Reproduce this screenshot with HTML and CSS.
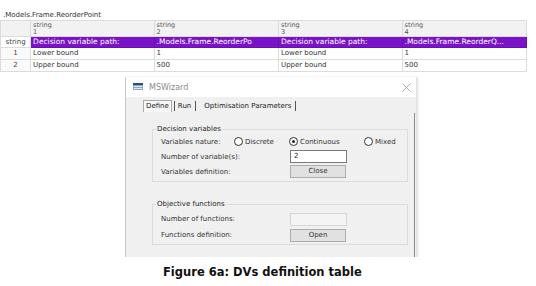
FILE: index.html
```html
<!DOCTYPE html>
<html lang="en">
<head>
    <meta charset="UTF-8">
    <meta name="viewport" content="width=device-width, initial-scale=1.0">
    <title>Figure 6a</title>
    <link rel="stylesheet" href="styles.css">
</head>
<body>
    <div class="shot">
        <div class="path-label">.Models.Frame.ReorderPoint</div>

        <table class="grid">
            <colgroup>
                <col class="col-head">
                <col class="col-a">
                <col class="col-b">
                <col class="col-a">
                <col class="col-b">
            </colgroup>
            <tr class="head-row">
                <th></th>
                <th>string<br>1</th>
                <th>string<br>2</th>
                <th>string<br>3</th>
                <th>string<br>4</th>
            </tr>
            <tr class="selected-row">
                <td class="row-head">string</td>
                <td>Decision variable path:</td>
                <td>.Models.Frame.ReorderPo</td>
                <td>Decision variable path:</td>
                <td>.Models.Frame.ReorderQ...</td>
            </tr>
            <tr>
                <td class="row-head">1</td>
                <td>Lower bound</td>
                <td>1</td>
                <td>Lower bound</td>
                <td>1</td>
            </tr>
            <tr>
                <td class="row-head">2</td>
                <td>Upper bound</td>
                <td>500</td>
                <td>Upper bound</td>
                <td>500</td>
            </tr>
        </table>

        <div class="dialog">
            <div class="titlebar">
                <svg class="app-icon" width="10" height="7" viewBox="0 0 10 7">
                    <rect x="0" y="0" width="10" height="7" fill="#8fa6c8"/>
                    <rect x="0" y="0" width="10" height="2" fill="#2c4a86"/>
                    <rect x="1" y="3" width="8" height="1" fill="#dfe7f3"/>
                    <rect x="1" y="5" width="8" height="1" fill="#dfe7f3"/>
                </svg>
                <span class="title">MSWizard</span>
                <svg class="close-x" width="9" height="9" viewBox="0 0 9 9">
                    <path d="M0.5 0.5 L8.5 8.5 M8.5 0.5 L0.5 8.5" stroke="#9a9a9a" stroke-width="0.8" fill="none"/>
                </svg>
            </div>

            <div class="dialog-body">
                <div class="tabs">
                    <span class="tab active">Define</span>
                    <span class="tab">Run</span>
                    <span class="tab">Optimisation Parameters</span>
                </div>

                <div class="pane">
                    <fieldset class="group group-dv">
                        <legend>Decision variables</legend>
                        <div class="field radio-row">
                            <span class="label short">Variables nature:</span>
                            <span class="radio r-discrete"><i class="dot"></i>Discrete</span>
                            <span class="radio r-continuous"><i class="dot checked"></i>Continuous</span>
                            <span class="radio"><i class="dot"></i>Mixed</span>
                        </div>
                        <div class="field">
                            <span class="label">Number of variable(s):</span>
                            <span class="textbox">2</span>
                        </div>
                        <div class="field">
                            <span class="label">Variables definition:</span>
                            <span class="button">Close</span>
                        </div>
                    </fieldset>

                    <fieldset class="group group-obj">
                        <legend>Objective functions</legend>
                        <div class="field tall">
                            <span class="label">Number of functions:</span>
                            <span class="textbox disabled"></span>
                        </div>
                        <div class="field tall">
                            <span class="label">Functions definition:</span>
                            <span class="button">Open</span>
                        </div>
                    </fieldset>
                </div>
            </div>
        </div>
    </div>

    <p class="caption">Figure 6a: DVs definition table</p>
</body>
</html>
```

FILE: styles.css
```css
body {
    margin: 0;
    width: 536px;
    background: white;
    font-family: "DejaVu Sans", Verdana, sans-serif;
    color: #222;
}
.shot {
    height: 257px;
    overflow: hidden;
    background: white;
}
.path-label {
    margin-top: 10px;
    padding-left: 3px;
    height: 10px;
    line-height: 10px;
    font-size: 7px;
    color: #333;
}

/* data grid */
.grid {
    width: 527px;
    border-collapse: collapse;
    table-layout: fixed;
    font-size: 7px;
}
.col-head { width: 30px; }
.col-a { width: 123px; }
.col-b { width: 124px; }
.grid th,
.grid td {
    border: 1px solid #dcdcdc;
    padding: 0 0 0 2px;
    text-align: left;
    white-space: nowrap;
    overflow: hidden;
}
.head-row th {
    height: 14px;
    background: #f2f2f2;
    font-weight: normal;
    font-size: 6.5px;
    line-height: 7px;
    color: #555;
    vertical-align: top;
    padding-top: 1px;
}
.grid td {
    height: 11px;
    line-height: 11px;
    color: #333;
}
.grid td.row-head {
    text-align: center;
    padding: 0;
    color: #444;
    background: #fafafa;
}
.selected-row td {
    height: 10px;
    line-height: 10px;
    background: #7a12c8;
    border-color: #6a0fb0;
    color: white;
    font-size: 7.5px;
}
.selected-row td.row-head {
    background: white;
    color: #444;
    font-size: 7px;
    border-color: #dcdcdc;
}

/* dialog window */
.dialog {
    margin: 5px 0 0 125px;
    width: 290px;
    border-left: 1px solid #c8c8c8;
    box-shadow: 2px 0 2px rgba(0,0,0,0.12);
    background: #f0f0f0;
}
.titlebar {
    height: 20px;
    background: white;
    display: flex;
    align-items: center;
    padding-left: 7px;
    padding-right: 4px;
}
.app-icon {
    margin-right: 6px;
    margin-top: -2px;
}
.title {
    font-size: 8px;
    color: #8c8c8c;
    flex: 1;
}
.close-x {
    margin-right: 1px;
}
.dialog-body {
    padding-top: 2px;
}
.tabs {
    height: 14px;
    padding-left: 17px;
    display: flex;
    align-items: center;
    font-size: 7px;
    color: #222;
}
.tab {
    border-right: 1px solid #555;
    padding: 0 4px 0 3px;
    line-height: 10px;
}
.tab.active {
    border: 1px solid #aaa;
    border-bottom: none;
    background: #f7f7f7;
    line-height: 11px;
    padding: 0 2px;
    margin-right: 2px;
}
.tab.active + .tab {
    border-left: 1px solid #555;
    margin-right: 5px;
}
.pane {
    border-right: 1px solid #8a8a8a;
    margin-right: 1px;
    padding: 12px 8px 20px 26px;
    height: 142px;
}

/* group boxes */
.group {
    margin: 0;
    width: 256px;
    box-sizing: border-box;
    border: 1px solid #dcdcdc;
    padding: 1px 0 2px 8px;
    font-size: 7px;
}
.group legend {
    padding: 0 1px;
    margin-left: -5px;
    color: #222;
    line-height: 8px;
}
.group-obj {
    margin-top: 18px;
    padding-top: 3px;
    padding-bottom: 1px;
}
.field {
    height: 15px;
    display: flex;
    align-items: center;
}
.field.tall {
    height: 16px;
}
.label {
    width: 129px;
    color: #333;
}
.label.short {
    width: 73px;
}
.radio {
    display: flex;
    align-items: center;
    color: #333;
}
.r-discrete { width: 55px; }
.r-continuous { width: 75px; }
.dot {
    width: 9px;
    height: 9px;
    border: 1px solid #333;
    border-radius: 50%;
    margin-right: 2px;
    background: white;
    box-sizing: border-box;
    position: relative;
}
.dot.checked::after {
    content: "";
    position: absolute;
    left: 2px;
    top: 2px;
    width: 3px;
    height: 3px;
    border-radius: 50%;
    background: #222;
}
.textbox {
    width: 57px;
    height: 13px;
    box-sizing: border-box;
    border: 1px solid #7a7a7a;
    background: white;
    padding-left: 3px;
    line-height: 11px;
}
.textbox.disabled {
    border-color: #d6d6d6;
    background: #f4f4f4;
}
.button {
    width: 56px;
    height: 13px;
    box-sizing: border-box;
    border: 1px solid #adadad;
    background: #e1e1e1;
    text-align: center;
    line-height: 11px;
    color: #333;
}

.caption {
    margin: 8px 0 0 163px;
    font-family: "DejaVu Sans", Verdana, sans-serif;
    font-weight: bold;
    font-size: 11.5px;
    color: #111;
}
```
